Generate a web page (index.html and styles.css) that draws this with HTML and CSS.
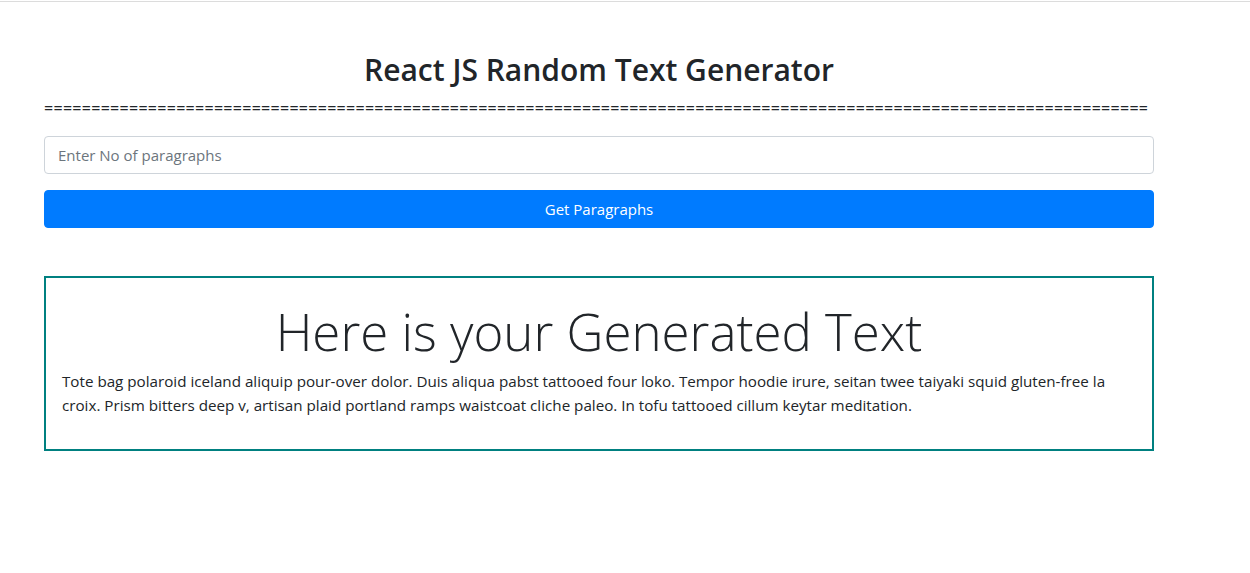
FILE: index.html
```html
<!DOCTYPE html>
<html lang="en">
<head>
<meta charset="utf-8">
<title>React JS Random Text Generator</title>
<link rel="stylesheet" href="styles.css">
</head>
<body>
<div class="topline"></div>
<div class="container">
  <h2 class="title">React JS Random Text Generator</h2>
  <div class="rule">=====================================================================================================================</div>
  <form class="form">
    <input class="input" type="text" placeholder="Enter No of paragraphs">
    <button class="btn" type="button">Get Paragraphs</button>
  </form>
  <div class="output">
    <h1 class="display">Here is your Generated Text</h1>
    <p class="para">Tote bag polaroid iceland aliquip pour-over dolor. Duis aliqua pabst tattooed four loko. Tempor hoodie irure, seitan twee taiyaki squid gluten-free la croix. Prism bitters deep v, artisan plaid portland ramps waistcoat cliche paleo. In tofu tattooed cillum keytar meditation.</p>
  </div>
</div>
</body>
</html>
```

FILE: styles.css
```css
* { box-sizing: border-box; }
html, body { margin: 0; padding: 0; background: #fff; }
body {
  font-family: "Open Sans", "Noto Sans", sans-serif;
  font-size: 16px;
  line-height: 1.5;
  color: #212529;
}
.topline { height: 1px; margin-top: 1px; background: #dcdcdc; }
.container {
  width: 1110px;
  margin-left: 44px;
  padding-top: 49px;
}
.title {
  margin: 0;
  text-align: center;
  font-size: 30px;
  font-weight: 600;
  line-height: 38px;
  color: #212529;
}
.rule {
  margin-top: 7px;
  font-size: 16px;
  line-height: 24px;
  letter-spacing: 0.29px;
  white-space: nowrap;
  color: #212529;
}
.form { display: flex; flex-direction: column; gap: 16px; margin-top: 16px; }
.input {
  height: 38px;
  width: 100%;
  padding: 6px 13px;
  font-family: inherit;
  font-size: 15px;
  color: #495057;
  border: 1px solid #ced4da;
  border-radius: 4px;
  outline: none;
}
.input::placeholder { color: #6c757d; }
.btn {
  height: 38px;
  width: 100%;
  background: #007bff;
  color: #fff;
  border: 1px solid #007bff;
  border-radius: 4px;
  font-family: inherit;
  font-size: 15px;
}
.output {
  margin-top: 48px;
  border: 2px solid #008080;
  padding: 21px 16px 16px;
}
.display {
  margin: 0 0 6px;
  text-align: center;
  font-size: 51px;
  font-weight: 300;
  line-height: 64px;
  color: #212529;
}
.para {
  margin: 0 0 16px;
  font-size: 15.2px;
  line-height: 24px;
}
```
